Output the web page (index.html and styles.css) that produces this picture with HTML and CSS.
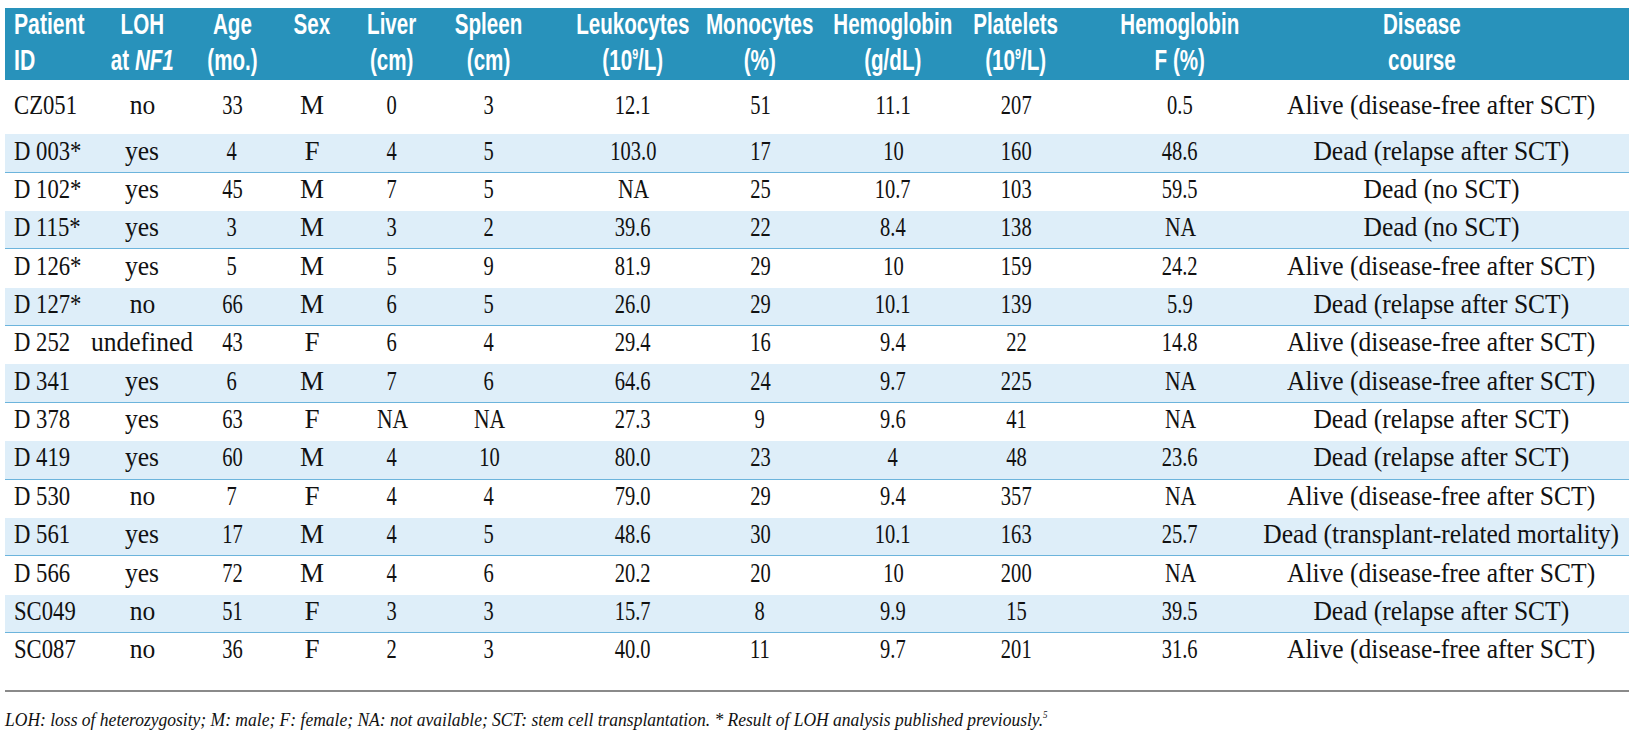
FILE: index.html
```html
<!DOCTYPE html>
<html>
<head>
<meta charset="utf-8">
<link rel="stylesheet" href="styles.css">
</head>
<body>
<div class="tbl">
  <div class="row head">
    <div class="c c1"><span class="h">Patient<br>ID</span></div>
    <div class="c c2"><span class="h">LOH<br>at <i>NF1</i></span></div>
    <div class="c c3"><span class="h">Age<br>(mo.)</span></div>
    <div class="c c4"><span class="h">Sex<br>&nbsp;</span></div>
    <div class="c c5"><span class="h">Liver<br>(cm)</span></div>
    <div class="c c6"><span class="h">Spleen<br>(cm)</span></div>
    <div class="c c7"><span class="h">Leukocytes<br>(10<sup>9</sup>/L)</span></div>
    <div class="c c8"><span class="h">Monocytes<br>(%)</span></div>
    <div class="c c9"><span class="h">Hemoglobin<br>(g/dL)</span></div>
    <div class="c c10"><span class="h">Platelets<br>(10<sup>9</sup>/L)</span></div>
    <div class="c c11"><span class="h">Hemoglobin<br>F (%)</span></div>
    <div class="c c12 hd"><span class="h">Disease<br>course</span></div>
  </div>

  <div class="row first">
    <div class="c c1"><span class="id">CZ051</span></div>
    <div class="c c2"><span class="w">no</span></div>
    <div class="c c3"><span class="n">33</span></div>
    <div class="c c4"><span>M</span></div>
    <div class="c c5"><span class="n">0</span></div>
    <div class="c c6"><span class="n">3</span></div>
    <div class="c c7"><span class="n">12.1</span></div>
    <div class="c c8"><span class="n">51</span></div>
    <div class="c c9"><span class="n">11.1</span></div>
    <div class="c c10"><span class="n">207</span></div>
    <div class="c c11"><span class="n">0.5</span></div>
    <div class="c c12"><span class="w">Alive (disease-free after SCT)</span></div>
  </div>

  <div class="row">
    <div class="c c1"><span class="id">D 003*</span></div>
    <div class="c c2"><span class="w">yes</span></div>
    <div class="c c3"><span class="n">4</span></div>
    <div class="c c4"><span>F</span></div>
    <div class="c c5"><span class="n">4</span></div>
    <div class="c c6"><span class="n">5</span></div>
    <div class="c c7"><span class="n">103.0</span></div>
    <div class="c c8"><span class="n">17</span></div>
    <div class="c c9"><span class="n">10</span></div>
    <div class="c c10"><span class="n">160</span></div>
    <div class="c c11"><span class="n">48.6</span></div>
    <div class="c c12"><span class="w">Dead (relapse after SCT)</span></div>
  </div>

  <div class="row">
    <div class="c c1"><span class="id">D 102*</span></div>
    <div class="c c2"><span class="w">yes</span></div>
    <div class="c c3"><span class="n">45</span></div>
    <div class="c c4"><span>M</span></div>
    <div class="c c5"><span class="n">7</span></div>
    <div class="c c6"><span class="n">5</span></div>
    <div class="c c7"><span class="na">NA</span></div>
    <div class="c c8"><span class="n">25</span></div>
    <div class="c c9"><span class="n">10.7</span></div>
    <div class="c c10"><span class="n">103</span></div>
    <div class="c c11"><span class="n">59.5</span></div>
    <div class="c c12"><span class="w">Dead (no SCT)</span></div>
  </div>

  <div class="row">
    <div class="c c1"><span class="id">D 115*</span></div>
    <div class="c c2"><span class="w">yes</span></div>
    <div class="c c3"><span class="n">3</span></div>
    <div class="c c4"><span>M</span></div>
    <div class="c c5"><span class="n">3</span></div>
    <div class="c c6"><span class="n">2</span></div>
    <div class="c c7"><span class="n">39.6</span></div>
    <div class="c c8"><span class="n">22</span></div>
    <div class="c c9"><span class="n">8.4</span></div>
    <div class="c c10"><span class="n">138</span></div>
    <div class="c c11"><span class="na">NA</span></div>
    <div class="c c12"><span class="w">Dead (no SCT)</span></div>
  </div>

  <div class="row">
    <div class="c c1"><span class="id">D 126*</span></div>
    <div class="c c2"><span class="w">yes</span></div>
    <div class="c c3"><span class="n">5</span></div>
    <div class="c c4"><span>M</span></div>
    <div class="c c5"><span class="n">5</span></div>
    <div class="c c6"><span class="n">9</span></div>
    <div class="c c7"><span class="n">81.9</span></div>
    <div class="c c8"><span class="n">29</span></div>
    <div class="c c9"><span class="n">10</span></div>
    <div class="c c10"><span class="n">159</span></div>
    <div class="c c11"><span class="n">24.2</span></div>
    <div class="c c12"><span class="w">Alive (disease-free after SCT)</span></div>
  </div>

  <div class="row">
    <div class="c c1"><span class="id">D 127*</span></div>
    <div class="c c2"><span class="w">no</span></div>
    <div class="c c3"><span class="n">66</span></div>
    <div class="c c4"><span>M</span></div>
    <div class="c c5"><span class="n">6</span></div>
    <div class="c c6"><span class="n">5</span></div>
    <div class="c c7"><span class="n">26.0</span></div>
    <div class="c c8"><span class="n">29</span></div>
    <div class="c c9"><span class="n">10.1</span></div>
    <div class="c c10"><span class="n">139</span></div>
    <div class="c c11"><span class="n">5.9</span></div>
    <div class="c c12"><span class="w">Dead (relapse after SCT)</span></div>
  </div>

  <div class="row">
    <div class="c c1"><span class="id">D 252</span></div>
    <div class="c c2"><span class="w">undefined</span></div>
    <div class="c c3"><span class="n">43</span></div>
    <div class="c c4"><span>F</span></div>
    <div class="c c5"><span class="n">6</span></div>
    <div class="c c6"><span class="n">4</span></div>
    <div class="c c7"><span class="n">29.4</span></div>
    <div class="c c8"><span class="n">16</span></div>
    <div class="c c9"><span class="n">9.4</span></div>
    <div class="c c10"><span class="n">22</span></div>
    <div class="c c11"><span class="n">14.8</span></div>
    <div class="c c12"><span class="w">Alive (disease-free after SCT)</span></div>
  </div>

  <div class="row">
    <div class="c c1"><span class="id">D 341</span></div>
    <div class="c c2"><span class="w">yes</span></div>
    <div class="c c3"><span class="n">6</span></div>
    <div class="c c4"><span>M</span></div>
    <div class="c c5"><span class="n">7</span></div>
    <div class="c c6"><span class="n">6</span></div>
    <div class="c c7"><span class="n">64.6</span></div>
    <div class="c c8"><span class="n">24</span></div>
    <div class="c c9"><span class="n">9.7</span></div>
    <div class="c c10"><span class="n">225</span></div>
    <div class="c c11"><span class="na">NA</span></div>
    <div class="c c12"><span class="w">Alive (disease-free after SCT)</span></div>
  </div>

  <div class="row">
    <div class="c c1"><span class="id">D 378</span></div>
    <div class="c c2"><span class="w">yes</span></div>
    <div class="c c3"><span class="n">63</span></div>
    <div class="c c4"><span>F</span></div>
    <div class="c c5"><span class="na">NA</span></div>
    <div class="c c6"><span class="na">NA</span></div>
    <div class="c c7"><span class="n">27.3</span></div>
    <div class="c c8"><span class="n">9</span></div>
    <div class="c c9"><span class="n">9.6</span></div>
    <div class="c c10"><span class="n">41</span></div>
    <div class="c c11"><span class="na">NA</span></div>
    <div class="c c12"><span class="w">Dead (relapse after SCT)</span></div>
  </div>

  <div class="row">
    <div class="c c1"><span class="id">D 419</span></div>
    <div class="c c2"><span class="w">yes</span></div>
    <div class="c c3"><span class="n">60</span></div>
    <div class="c c4"><span>M</span></div>
    <div class="c c5"><span class="n">4</span></div>
    <div class="c c6"><span class="n">10</span></div>
    <div class="c c7"><span class="n">80.0</span></div>
    <div class="c c8"><span class="n">23</span></div>
    <div class="c c9"><span class="n">4</span></div>
    <div class="c c10"><span class="n">48</span></div>
    <div class="c c11"><span class="n">23.6</span></div>
    <div class="c c12"><span class="w">Dead (relapse after SCT)</span></div>
  </div>

  <div class="row">
    <div class="c c1"><span class="id">D 530</span></div>
    <div class="c c2"><span class="w">no</span></div>
    <div class="c c3"><span class="n">7</span></div>
    <div class="c c4"><span>F</span></div>
    <div class="c c5"><span class="n">4</span></div>
    <div class="c c6"><span class="n">4</span></div>
    <div class="c c7"><span class="n">79.0</span></div>
    <div class="c c8"><span class="n">29</span></div>
    <div class="c c9"><span class="n">9.4</span></div>
    <div class="c c10"><span class="n">357</span></div>
    <div class="c c11"><span class="na">NA</span></div>
    <div class="c c12"><span class="w">Alive (disease-free after SCT)</span></div>
  </div>

  <div class="row">
    <div class="c c1"><span class="id">D 561</span></div>
    <div class="c c2"><span class="w">yes</span></div>
    <div class="c c3"><span class="n">17</span></div>
    <div class="c c4"><span>M</span></div>
    <div class="c c5"><span class="n">4</span></div>
    <div class="c c6"><span class="n">5</span></div>
    <div class="c c7"><span class="n">48.6</span></div>
    <div class="c c8"><span class="n">30</span></div>
    <div class="c c9"><span class="n">10.1</span></div>
    <div class="c c10"><span class="n">163</span></div>
    <div class="c c11"><span class="n">25.7</span></div>
    <div class="c c12"><span class="w">Dead (transplant-related mortality)</span></div>
  </div>

  <div class="row">
    <div class="c c1"><span class="id">D 566</span></div>
    <div class="c c2"><span class="w">yes</span></div>
    <div class="c c3"><span class="n">72</span></div>
    <div class="c c4"><span>M</span></div>
    <div class="c c5"><span class="n">4</span></div>
    <div class="c c6"><span class="n">6</span></div>
    <div class="c c7"><span class="n">20.2</span></div>
    <div class="c c8"><span class="n">20</span></div>
    <div class="c c9"><span class="n">10</span></div>
    <div class="c c10"><span class="n">200</span></div>
    <div class="c c11"><span class="na">NA</span></div>
    <div class="c c12"><span class="w">Alive (disease-free after SCT)</span></div>
  </div>

  <div class="row">
    <div class="c c1"><span class="id">SC049</span></div>
    <div class="c c2"><span class="w">no</span></div>
    <div class="c c3"><span class="n">51</span></div>
    <div class="c c4"><span>F</span></div>
    <div class="c c5"><span class="n">3</span></div>
    <div class="c c6"><span class="n">3</span></div>
    <div class="c c7"><span class="n">15.7</span></div>
    <div class="c c8"><span class="n">8</span></div>
    <div class="c c9"><span class="n">9.9</span></div>
    <div class="c c10"><span class="n">15</span></div>
    <div class="c c11"><span class="n">39.5</span></div>
    <div class="c c12"><span class="w">Dead (relapse after SCT)</span></div>
  </div>

  <div class="row">
    <div class="c c1"><span class="id">SC087</span></div>
    <div class="c c2"><span class="w">no</span></div>
    <div class="c c3"><span class="n">36</span></div>
    <div class="c c4"><span>F</span></div>
    <div class="c c5"><span class="n">2</span></div>
    <div class="c c6"><span class="n">3</span></div>
    <div class="c c7"><span class="n">40.0</span></div>
    <div class="c c8"><span class="n">11</span></div>
    <div class="c c9"><span class="n">9.7</span></div>
    <div class="c c10"><span class="n">201</span></div>
    <div class="c c11"><span class="n">31.6</span></div>
    <div class="c c12"><span class="w">Alive (disease-free after SCT)</span></div>
  </div>
</div>
<div class="rule"></div>
<p class="note"><span class="nt">LOH: loss of heterozygosity; M: male; F: female; NA: not available; SCT: stem cell transplantation. * Result of LOH analysis published previously.<sup>5</sup></span></p>
</body>
</html>
```

FILE: styles.css
```css
html, body {
  margin: 0;
  padding: 0;
  background: #ffffff;
}

body {
  width: 1638px;
  height: 737px;
  overflow: hidden;
  font-family: "Liberation Serif", "Times New Roman", serif;
  color: #111111;
}

.tbl {
  margin: 8px 0 0 5px;
  width: 1624px;
}

.row {
  display: grid;
  grid-template-columns: 87px 95px 85px 80px 88.5px 120.5px 135.5px 130px 128px 143.5px 147px 384px;
  font-size: 27px;
  line-height: 27px;
  padding: 3.3px 0 8px;
  box-sizing: border-box;
  height: 38.36px;
}

.row:nth-child(odd) {
  background: #deeef9;
  border-bottom: 1.5px solid #6cb4dc;
}

.row.first {
  padding: 12.3px 0 15px;
  height: 54.3px;
}

.row.head {
  background: #2892bb;
  color: #ffffff;
  font-family: "Liberation Sans", Arial, sans-serif;
  font-weight: bold;
  font-size: 29px;
  line-height: 36px;
  height: 72px;
  padding: 0;
  border: none;
}

.c {
  display: flex;
  justify-content: center;
  white-space: nowrap;
  min-width: 0;
}

.c > span {
  display: inline-block;
  transform-origin: 50% 50%;
}

.c1 { justify-content: flex-start; padding-left: 9px; }
.c1 > span { transform-origin: 0 50%; }
.c2 { padding-left: 5px; }
.c3 { padding-left: 5px; }
.c5 { padding-right: 8.5px; }
.c6 { padding-right: 23.5px; }
.c7 { padding-left: 8.5px; }
.c8 { padding-right: 3px; }
.c9 { padding-left: 5px; }
.c10 { padding-right: 20.5px; }
.c11 { padding-left: 17px; }
.c12 { padding-left: 8px; }
.hd { padding-left: 0; padding-right: 30px; }

.head .h {
  margin-top: -2px;
  text-align: center;
  transform: scaleX(0.71);
}

.head .c1 .h { text-align: left; transform: scaleX(0.73); }

.head .h sup {
  font-size: 15px;
  line-height: 0;
  vertical-align: 11px;
}

.head .h i {
  font-style: italic;
}

.n { transform: scaleX(0.76); }
.id { transform: scaleX(0.84); }
.w { transform: scaleX(0.945); }
.na { transform: scaleX(0.8); }

.rule {
  margin: 19px 0 0 5px;
  width: 1624px;
  height: 2px;
  background: #8a8a8a;
}

.note {
  margin: 17px 0 0 5px;
  font-style: italic;
  font-size: 19.5px;
  line-height: 22px;
  white-space: nowrap;
}

.nt {
  display: inline-block;
  transform-origin: 0 50%;
  transform: scaleX(0.898);
}

.nt sup {
  font-size: 10px;
  line-height: 0;
  vertical-align: 8px;
}
```
